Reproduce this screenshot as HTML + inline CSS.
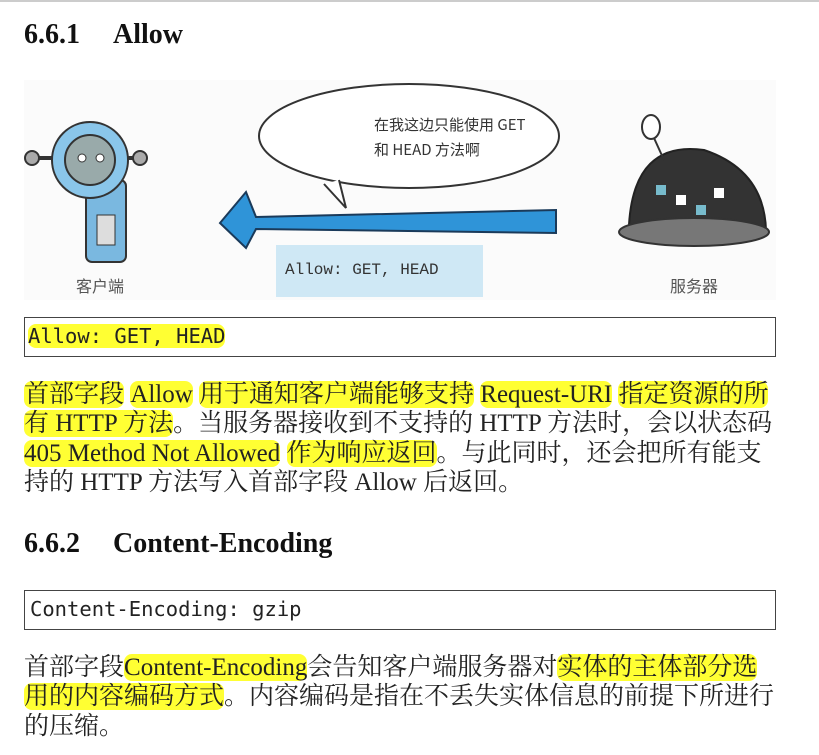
<!DOCTYPE html>
<html><head><meta charset="utf-8"><style>
body{margin:0;width:819px;height:755px;background:#fff;position:relative;overflow:hidden;font-family:"Liberation Serif","Noto Serif CJK SC",serif;color:#222}
.a{position:absolute;white-space:nowrap}
h2{position:absolute;margin:0;font-size:28px;font-weight:bold;color:#111;white-space:nowrap}
.box{position:absolute;left:24px;width:750px;border:1.5px solid #444;height:38px}
.mono{font-family:"DejaVu Sans Mono","Liberation Mono",monospace;font-size:20.5px}
.p{font-size:25px;line-height:29.3px;left:24px;letter-spacing:0;font-family:"Liberation Serif","Noto Serif CJK SC",serif}
.h{background:#ffff33;border-radius:8px}
</style></head><body>
<div class="a" style="left:0;top:0;width:819px;height:2px;background:#ccc"></div>
<h2 style="left:24px;top:19px">6.6.1<span style="display:inline-block;width:33px"></span>Allow</h2>
<div class="a" style="left:24px;top:80px;width:752px;height:220px;background:#fbfbfb"></div>
<svg class="a" style="left:24px;top:80px" width="752" height="220">
<rect x="62" y="100" width="40" height="82" rx="6" fill="#7ab8e0" stroke="#333" stroke-width="2"/>
<rect x="73" y="135" width="18" height="30" fill="#ddd" stroke="#333"/>
<line x1="8" y1="78" x2="120" y2="78" stroke="#333" stroke-width="4"/>
<circle cx="8" cy="78" r="7" fill="#aaa" stroke="#333" stroke-width="2"/>
<circle cx="116" cy="78" r="7" fill="#aaa" stroke="#333" stroke-width="2"/>
<circle cx="66" cy="80" r="38" fill="#8ac6ea" stroke="#333" stroke-width="2"/>
<circle cx="66" cy="80" r="25" fill="#9aa" stroke="#333" stroke-width="2"/>
<circle cx="58" cy="78" r="4" fill="#fff" stroke="#333"/><circle cx="76" cy="78" r="4" fill="#fff" stroke="#333"/>
<ellipse cx="385" cy="56" rx="150" ry="52" fill="#fff" stroke="#333" stroke-width="2"/>
<path d="M315 100 L322 128 L300 104" fill="#fff" stroke="#333" stroke-width="2"/>
<text x="350" y="50" font-size="15" font-family="Noto Sans CJK SC,sans-serif" fill="#333">在我这边只能使用 GET</text>
<text x="350" y="75" font-size="15" font-family="Noto Sans CJK SC,sans-serif" fill="#333">和 HEAD 方法啊</text>
<path d="M232 137 L532 130 L532 153 L232 149 L222 168 L196 143 L222 112 Z" fill="#2f94d8" stroke="#1a3a5a" stroke-width="2"/>
<rect x="252" y="165" width="207" height="52" fill="#cfe8f5"/>
<text x="261" y="194" font-size="16" font-family="Liberation Mono,monospace" fill="#333">Allow: GET, HEAD</text>
<path d="M605 145 Q610 60 680 70 Q740 90 742 150 Z" fill="#333" stroke="#222" stroke-width="2"/>
<ellipse cx="670" cy="152" rx="75" ry="14" fill="#777" stroke="#333" stroke-width="2"/>
<rect x="632" y="105" width="10" height="10" fill="#7bc"/><rect x="652" y="115" width="10" height="10" fill="#fff"/><rect x="672" y="125" width="10" height="10" fill="#7bc"/><rect x="690" y="108" width="10" height="10" fill="#fff"/>
<ellipse cx="627" cy="47" rx="9" ry="12" fill="#fff" stroke="#333" stroke-width="2"/>
<line x1="630" y1="58" x2="640" y2="80" stroke="#333" stroke-width="2"/>
<text x="52" y="212" font-size="16" font-family="Noto Sans CJK SC,sans-serif" fill="#555">客户端</text>
<text x="646" y="212" font-size="16" font-family="Noto Sans CJK SC,sans-serif" fill="#555">服务器</text>
</svg>
<div class="box" style="top:317px"></div>
<div class="a mono" style="left:28px;top:324px"><span class="h">Allow: GET, HEAD</span></div>
<div class="a p" style="top:380px"><span class="h">首部字段</span> <span class="h">Allow</span> <span class="h">用于通知客户端能够支持</span> <span class="h">Request-URI</span> <span class="h">指定资源的所</span><br><span class="h">有 HTTP 方法</span>。当服务器接收到不支持的 HTTP 方法时，会以状态码<br><span class="h">405 Method Not Allowed</span> <span class="h">作为响应返回</span>。与此同时，还会把所有能支<br>持的 HTTP 方法写入首部字段 Allow 后返回。</div>
<h2 style="left:24px;top:528px">6.6.2<span style="display:inline-block;width:33px"></span>Content-Encoding</h2>
<div class="box" style="top:590px"></div>
<div class="a mono" style="left:30px;top:597px">Content-Encoding: gzip</div>
<div class="a p" style="top:653px">首部字段<span class="h">Content-Encoding</span>会告知客户端服务器对<span class="h">实体的主体部分选</span><br><span class="h">用的内容编码方式</span>。内容编码是指在不丢失实体信息的前提下所进行<br>的压缩。</div>
</body></html>
